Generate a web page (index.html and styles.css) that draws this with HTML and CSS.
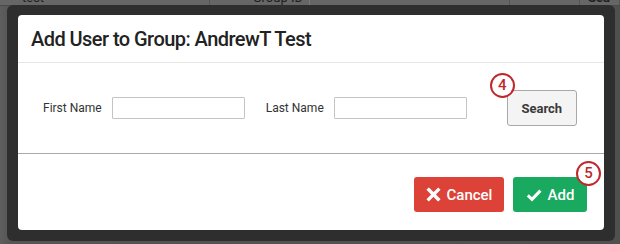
FILE: index.html
```html
<!DOCTYPE html>
<html>
<head>
<meta charset="utf-8">
<link rel="stylesheet" href="styles.css">
</head>
<body>
<div class="page">
  <div class="table-head">
    <div class="th th-name">test</div>
    <div class="th th-group">Group ID</div>
    <div class="th th-a"></div>
    <div class="th th-b"></div>
    <div class="th th-search">Sea</div>
  </div>
  <div class="page-rest"></div>
</div>

<div class="frame">
  <div class="modal">
    <div class="modal-header">
      <h1 class="modal-title">Add User to Group: AndrewT Test</h1>
    </div>
    <div class="modal-body">
      <label class="field-label">First Name</label>
      <input class="field-input" type="text">
      <label class="field-label field-label-last">Last Name</label>
      <input class="field-input" type="text">
      <div class="search-wrap">
        <button class="btn-search">Search</button>
        <span class="badge badge-search">4</span>
      </div>
    </div>
    <div class="modal-footer">
      <button class="btn btn-cancel">
        <svg class="icon" width="15" height="15" viewBox="0 0 16 16"><path d="M3 3 L13 13 M13 3 L3 13" stroke="#fff" stroke-width="3.6" stroke-linecap="square" fill="none"/></svg>
        <span>Cancel</span>
      </button>
      <div class="add-wrap">
        <button class="btn btn-add">
          <svg class="icon" width="16" height="14" viewBox="0 0 16 14"><path d="M1.8 7.4 L6 11.4 L14.4 2.6" stroke="#fff" stroke-width="3" stroke-linecap="butt" stroke-linejoin="miter" fill="none"/></svg>
          <span>Add</span>
        </button>
        <span class="badge badge-add">5</span>
      </div>
    </div>
  </div>
</div>
</body>
</html>
```

FILE: styles.css
```css
* { box-sizing: border-box; }

html, body {
  margin: 0;
  padding: 0;
}

body {
  width: 620px;
  height: 244px;
  overflow: hidden;
  background: #555555;
  font-family: Roboto, "Liberation Sans", Arial, sans-serif;
  position: relative;
}

.page {
  width: 620px;
  height: 244px;
  background: linear-gradient(to right, #5e5e5e 0, #555 10px, #505050 100%);
}

.table-head {
  display: flex;
  align-items: flex-end;
  height: 6px;
  overflow: hidden;
  background: #666;
  border-bottom: 1px solid #4a4a4a;
}

.th {
  font-size: 13px;
  line-height: 14px;
  color: #1e1e1e;
  height: 14px;
  flex: none;
  border-right: 1px solid #555;
}

.th-name { width: 210px; padding-left: 22px; }
.th-group { width: 100px; text-align: right; padding-right: 6px; border-right: 1px solid #777; }
.th-a { width: 200px; }
.th-b { width: 70px; }
.th-search { width: 40px; padding-left: 8px; font-weight: bold; }

.frame {
  position: absolute;
  left: 7px;
  top: 5px;
  width: 608px;
  height: 236px;
  padding: 10px 11px 11px 11px;
  background: #2e2e2e;
  border-radius: 6px;
}

.modal {
  width: 586px;
  height: 215px;
  background: #fff;
  border-radius: 4px;
  display: flex;
  flex-direction: column;
}

.modal-header {
  height: 48px;
  flex: none;
  border-bottom: 1px solid #e6e6e6;
  display: flex;
  align-items: center;
  padding-left: 13px;
}

.modal-title {
  margin: 0;
  font-size: 20px;
  font-weight: 500;
  color: #222;
  letter-spacing: -0.55px;
}

.modal-body {
  height: 91px;
  flex: none;
  border-bottom: 1px solid #a9a9a9;
  display: flex;
  align-items: center;
  padding-left: 25px;
}

.field-label {
  font-size: 12px;
  color: #333;
  margin-right: 10px;
}

.field-label-last {
  margin-left: 21px;
  margin-right: 10px;
}

.field-input {
  width: 133px;
  height: 22px;
  border: 1px solid #c4c4c4;
  border-radius: 1px;
  padding: 0;
  margin: 0;
  background: #fff;
}

.search-wrap {
  position: relative;
  margin-left: 40px;
  display: flex;
}

.btn-search {
  width: 70px;
  height: 36px;
  margin: 0;
  background: #f4f4f4;
  border: 1px solid #a8a8a8;
  border-radius: 3px;
  font-family: Roboto, "Liberation Sans", Arial, sans-serif;
  font-size: 13px;
  font-weight: bold;
  color: #3a3a3a;
  padding: 0;
}

.badge {
  position: absolute;
  width: 25px;
  height: 25px;
  border: 2px solid #c0272d;
  border-radius: 50%;
  background: #fff;
  color: #c0272d;
  font-size: 15px;
  font-weight: 500;
  display: flex;
  align-items: center;
  justify-content: center;
  line-height: 1;
}

.badge-search {
  left: -17px;
  top: -17px;
}

.modal-footer {
  flex: 1;
  display: flex;
  justify-content: flex-end;
  align-items: flex-start;
  padding-top: 23px;
  padding-right: 17px;
  gap: 9px;
}

.btn {
  height: 35px;
  border: none;
  border-radius: 3px;
  color: #fff;
  font-family: Roboto, "Liberation Sans", Arial, sans-serif;
  font-size: 15px;
  font-weight: 500;
  display: flex;
  align-items: center;
  justify-content: center;
  gap: 6px;
  padding: 0;
  margin: 0;
}

.btn-cancel {
  width: 90px;
  background: #dc4238;
}

.btn-add {
  width: 74px;
  background: #19aa5f;
}

.add-wrap {
  position: relative;
  display: flex;
}

.badge-add {
  left: 63px;
  top: -16px;
}

.icon { display: block; flex: none; }
```
